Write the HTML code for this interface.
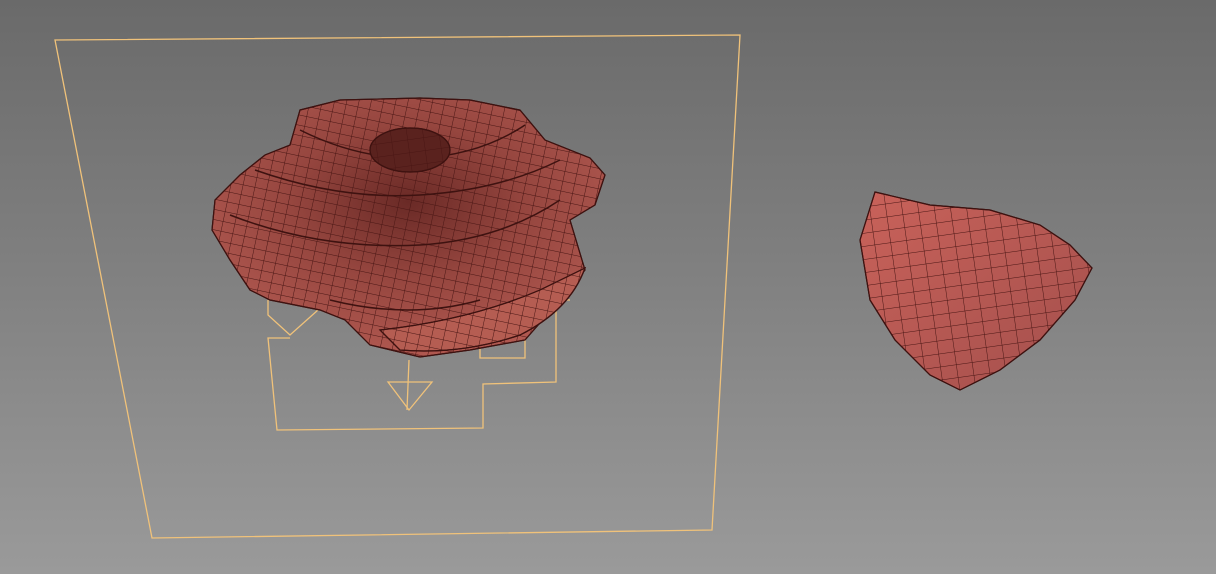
<!DOCTYPE html>
<html><head><style>
html,body{margin:0;padding:0;width:1216px;height:574px;overflow:hidden}
body{background:linear-gradient(180deg,#6a6a6a 0%,#7f7f7f 45%,#9a9a9a 100%)}
svg{position:absolute;left:0;top:0}
</style></head><body>
<svg width="1216" height="574" viewBox="0 0 1216 574">
<defs>
<pattern id="mesh" width="12" height="10" patternUnits="userSpaceOnUse" patternTransform="rotate(12)">
<path d="M0 0H12M0 0V10" stroke="#4a1614" stroke-width="1" fill="none"/>
</pattern>
<pattern id="mesh2" width="16" height="13" patternUnits="userSpaceOnUse" patternTransform="rotate(-8)">
<path d="M0 0H16M0 0V13" stroke="#4a1614" stroke-width="1" fill="none"/>
</pattern>
<radialGradient id="rg" cx="0.5" cy="0.4" r="0.6">
<stop offset="0" stop-color="#6a2a26"/><stop offset="0.5" stop-color="#96463f"/><stop offset="1" stop-color="#b05850"/>
</radialGradient>
<linearGradient id="pg" x1="0" y1="0" x2="1" y2="1">
<stop offset="0" stop-color="#c9625a"/><stop offset="1" stop-color="#a34f4c"/>
</linearGradient>
</defs>
<g fill="none" stroke="#f0c27a" stroke-width="1.3">
<polygon points="55,40 740,35 712,530 152,538"/>
<polyline points="268,300 268,315 290,335 318,310 312,300"/>
<polyline points="290,338 268,338 277,430 483,428 483,384 556,382 556,300 570,300"/>
<polyline points="480,180 570,180 570,210"/>
<polyline points="480,345 480,358 525,358 525,340"/>
<polygon points="388,382 432,382 409,410"/>
<line x1="409" y1="360" x2="407" y2="410"/>
<line x1="272" y1="238" x2="310" y2="238"/>
</g>
<g stroke="#3e1210" stroke-width="1.2">
<path d="M300,110 L340,100 L420,98 L470,100 L520,110 L545,140 L590,158 L605,175 L595,205 L570,220 L585,270 L560,300 L525,340 L470,350 L420,357 L370,345 L345,320 L320,310 L270,300 L250,290 L230,260 L212,230 L215,200 L240,175 L265,155 L290,145 Z" fill="url(#rg)"/>
<path d="M300,110 L340,100 L420,98 L470,100 L520,110 L545,140 L590,158 L605,175 L595,205 L570,220 L585,270 L560,300 L525,340 L470,350 L420,357 L370,345 L345,320 L320,310 L270,300 L250,290 L230,260 L212,230 L215,200 L240,175 L265,155 L290,145 Z" fill="url(#mesh)"/>
<g fill="none" stroke="#3e1210" stroke-width="1.5">
<path d="M230,215 Q320,250 420,245 Q500,240 560,200"/>
<path d="M255,170 Q340,200 420,195 Q500,190 560,160"/>
<path d="M300,130 Q360,160 420,158 Q480,155 525,125"/>
<path d="M330,300 Q410,320 480,300"/>
</g>
<path d="M380,330 Q470,320 540,290 L585,268 Q570,310 520,335 Q460,355 400,350 Z" fill="#b55d52"/>
<path d="M380,330 Q470,320 540,290 L585,268 Q570,310 520,335 Q460,355 400,350 Z" fill="url(#mesh)"/>
<ellipse cx="410" cy="150" rx="40" ry="22" fill="#5a221e"/>
<ellipse cx="410" cy="150" rx="40" ry="22" fill="url(#mesh2)"/>
</g>
<g stroke="#3e1210" stroke-width="1.2">
<path d="M875,192 L930,205 L990,210 L1040,225 L1070,245 L1092,268 L1075,300 L1040,340 L1000,370 L960,390 L930,375 L895,340 L870,300 L860,240 Z" fill="url(#pg)"/>
<path d="M875,192 L930,205 L990,210 L1040,225 L1070,245 L1092,268 L1075,300 L1040,340 L1000,370 L960,390 L930,375 L895,340 L870,300 L860,240 Z" fill="url(#mesh2)"/>
</g>
</svg>
</body></html>
